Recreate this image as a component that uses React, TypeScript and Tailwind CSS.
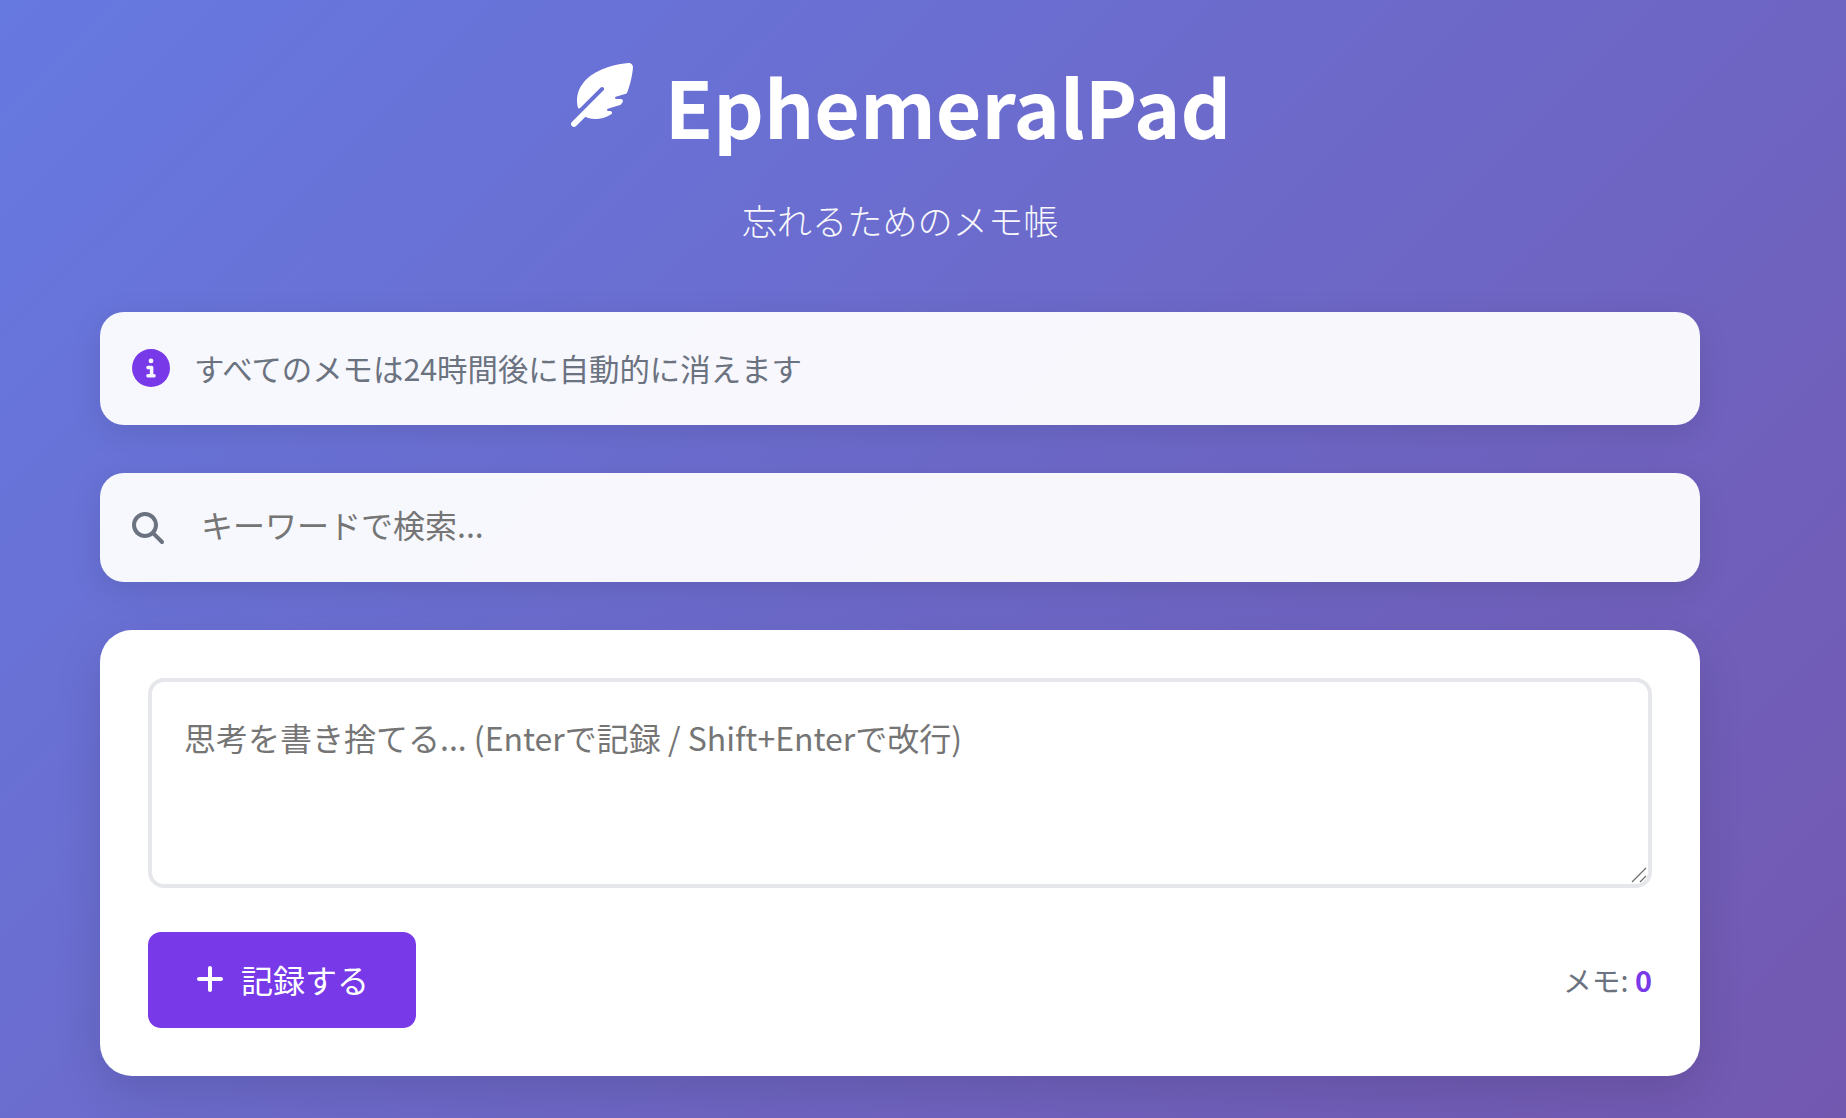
import { FaCircleInfo, FaFeatherPointed, FaMagnifyingGlass, FaPlus } from "react-icons/fa6";

export default function App() {
    return (
        <div className="h-[1118px] overflow-hidden bg-[linear-gradient(135deg,#6679e1_0%,#7358b0_100%)] font-['Noto_Sans_CJK_JP',sans-serif]">
            <div className="ml-[100px] flex w-[1600px] flex-col">
                <header className="flex flex-col items-center pt-[45px] text-white">
                    <h1 className="flex h-[120px] items-center gap-[32px] text-[78.7px] font-bold leading-[120px]">
                        <FaFeatherPointed className="-mt-[20px] h-[64px] w-[64px]" />
                        EphemeralPad
                    </h1>
                    <p className="mt-[31px] text-[35.2px] font-light leading-[48px] opacity-95">忘れるためのメモ帳</p>
                </header>

                <div className="mt-[68px] flex h-[113px] items-center gap-[24px] rounded-[24px] bg-white/95 px-[32px] shadow-[0_8px_32px_rgba(0,0,0,0.1)]">
                    <FaCircleInfo className="-mt-[2px] h-[38px] w-[38px] text-[#7839e8]" />
                    <span className="text-[30.4px] leading-[45px] text-[#6b7280]">すべてのメモは24時間後に自動的に消えます</span>
                </div>

                <div className="mt-[48px] flex h-[109px] items-center gap-[37px] rounded-[24px] bg-white/95 px-[32px] shadow-[0_8px_32px_rgba(0,0,0,0.1)]">
                    <FaMagnifyingGlass className="h-[32px] w-[32px] text-[#6b7280]" />
                    <input
                        placeholder="キーワードで検索..."
                        className="flex-1 bg-transparent pb-[8px] text-[32px] text-[#374151] outline-none placeholder:text-[#757575]"
                    />
                </div>

                <div className="mt-[48px] flex h-[446px] flex-col rounded-[32px] bg-white p-[48px] shadow-[0_16px_48px_rgba(0,0,0,0.12)]">
                    <div className="relative h-[210px]">
                        <textarea
                            placeholder="思考を書き捨てる... (Enterで記録 / Shift+Enterで改行)"
                            className="block h-full w-full resize-none rounded-[16px] border-[4px] border-[#e5e7eb] px-[32px] pt-[31px] text-[32px] leading-[48px] outline-none placeholder:text-[#757575]"
                        />
                        {/* resize grip */}
                        <svg className="absolute bottom-[5px] right-[5px] h-[16px] w-[16px] text-[#6b6b6b]" viewBox="0 0 16 16" fill="none" stroke="currentColor" strokeWidth="1.2">
                            <path d="M1 15 15 1M9 15l6-6" />
                        </svg>
                    </div>
                    <div className="mt-[44px] flex items-center justify-between">
                        <button className="flex h-[96px] w-[268px] items-center justify-center gap-[15px] rounded-[13px] bg-[#7839e8] pb-[2px] pr-[1px] text-[32px] text-white">
                            <FaPlus className="h-[32px] w-[32px]" />
                            記録する
                        </button>
                        <span className="text-[28.8px] text-[#6b7280]">
                            メモ: <span className="font-bold text-[#7839e8]">0</span>
                        </span>
                    </div>
                </div>
            </div>
        </div>
    );
}
